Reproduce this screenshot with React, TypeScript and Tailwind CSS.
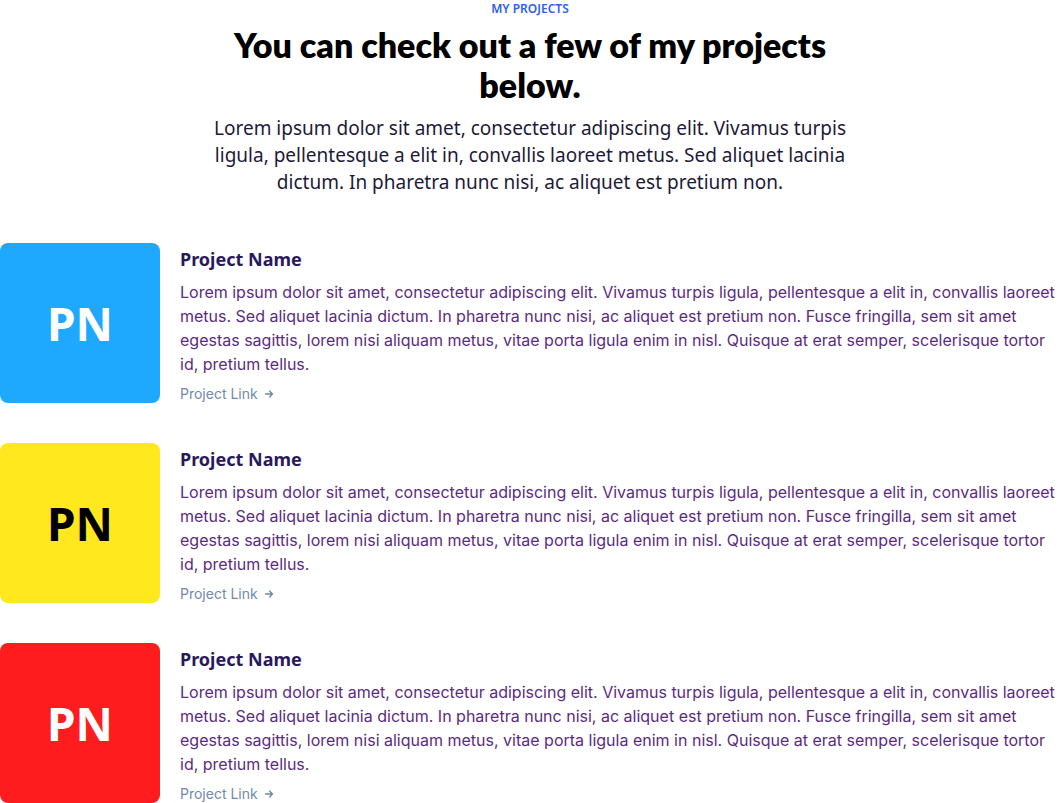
import React from "react";

const projects = [
  { bg: "bg-[#1ea9ff]", fg: "text-white" },
  { bg: "bg-[#ffe81e]", fg: "text-black" },
  { bg: "bg-[#ff1c1e]", fg: "text-white" },
];

const body =
  "Lorem ipsum dolor sit amet, consectetur adipiscing elit. Vivamus turpis ligula, pellentesque a elit in, convallis laoreet metus. Sed aliquet lacinia dictum. In pharetra nunc nisi, ac aliquet est pretium non. Fusce fringilla, sem sit amet egestas sagittis, lorem nisi aliquam metus, vitae porta ligula enim in nisl. Quisque at erat semper, scelerisque tortor id, pretium tellus.";

export default function App() {
  return (
    <div className="w-[1060px] bg-white">
      <div className="flex flex-col items-center text-center">
        <div className="mt-[2px] text-[12px] leading-[14px] font-semibold text-[#2f5ef0] font-['Noto_Sans',sans-serif]">
          MY PROJECTS
        </div>
        <h1 className="mt-[9px] w-[640px] text-[34px] leading-[40px] font-extrabold text-black font-['Lato',sans-serif]">
          You can check out a few of my projects below.
        </h1>
        <p className="mt-[10px] w-[650px] text-[19px] leading-[27px] text-[#1d1a3a] font-['Noto_Sans',sans-serif]">
          Lorem ipsum dolor sit amet, consectetur adipiscing elit. Vivamus turpis ligula, pellentesque a elit in, convallis laoreet metus. Sed aliquet lacinia dictum. In pharetra nunc nisi, ac aliquet est pretium non.
        </p>
      </div>
      <div className="mt-[47px] flex flex-col gap-[40px]">
        {projects.map((p, i) => (
          <div key={i} className="flex gap-[20px]">
            <div
              className={`w-[160px] h-[160px] shrink-0 rounded-[8px] flex items-center justify-center ${p.bg} ${p.fg} text-[46px] font-bold font-['Noto_Sans',sans-serif]`}
            >
              PN
            </div>
            <div className="flex-1 pr-[4px] font-['Inter',sans-serif]">
              <div className="mt-[4px] text-[18px] leading-[24px] font-bold text-[#2a1a5c] font-['Noto_Sans',sans-serif]">
                Project Name
              </div>
              <p className="mt-[9px] text-[16px] leading-[24px] text-[#5b2c80]">{body}</p>
              <div className="mt-[9px] flex items-center gap-[6px] text-[14px] leading-[18px] text-[#7289a8]">
                <span>Project Link</span>
                <svg width="10" height="10" viewBox="0 0 10 10" fill="none" stroke="currentColor" strokeWidth="1.4" strokeLinecap="round" strokeLinejoin="round">
                  <path d="M1.5 5h7M5.5 2l3 3-3 3" />
                </svg>
              </div>
            </div>
          </div>
        ))}
      </div>
    </div>
  );
}
